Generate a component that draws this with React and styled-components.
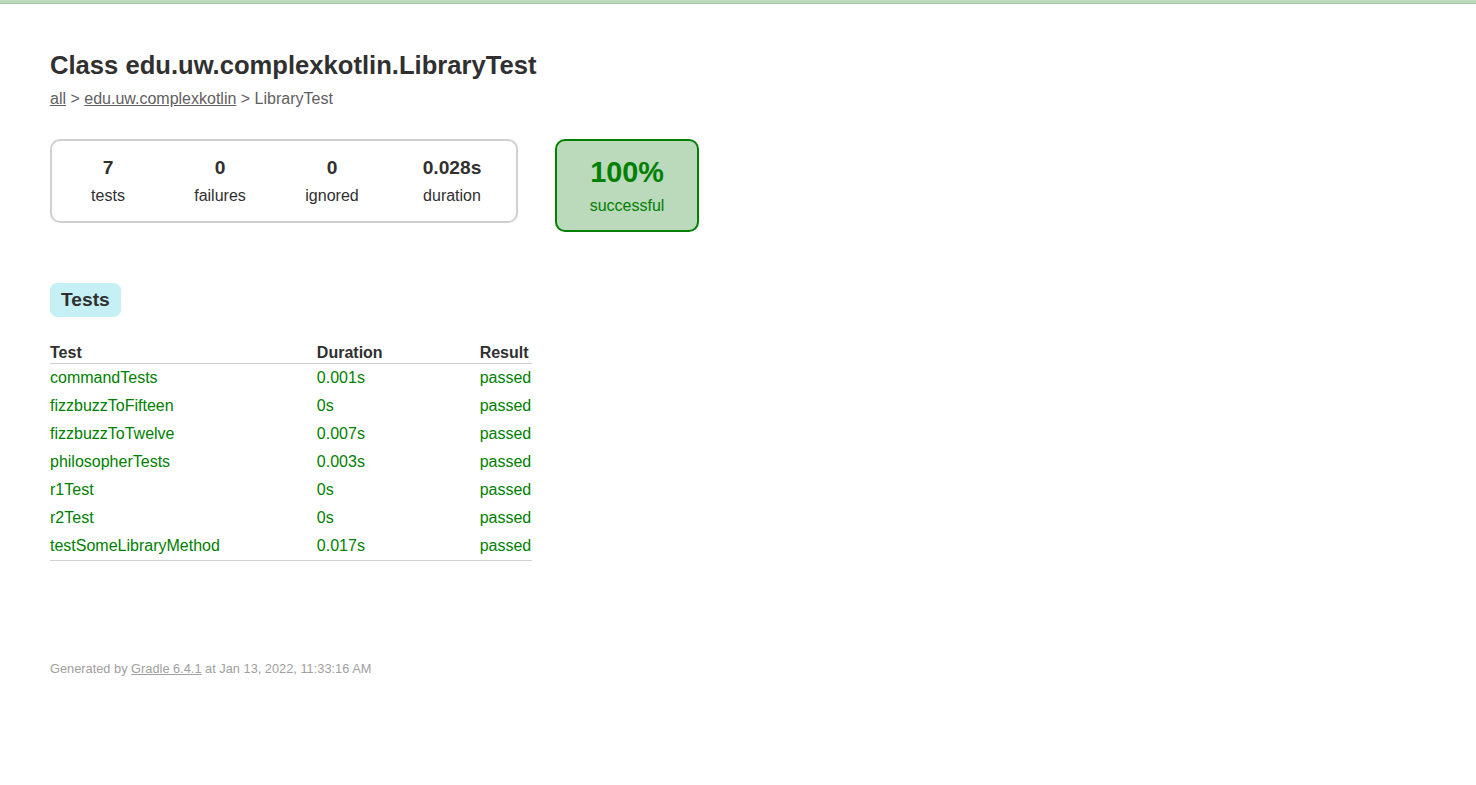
import React from 'react'
import styled, { createGlobalStyle } from 'styled-components'

const GlobalStyle = createGlobalStyle`
  html, body {
    margin: 0;
    padding: 0;
  }
  body {
    font-family: "Liberation Sans", Arial, sans-serif;
    font-size: 16px;
    color: #303030;
    background: #ffffff;
  }
`

const TopBar = styled.div`
  height: 3px;
  background-color: #bbd9bb;
  border-bottom: 1px solid #a8c8a8;
`

const Content = styled.div`
  padding: 30px 50px;
`

const Title = styled.h1`
  font-size: 25.6px;
  font-weight: bold;
  margin: 17px 0 10px;
  white-space: nowrap;
`

const Breadcrumbs = styled.div`
  color: #606060;
  a {
    color: #606060;
    text-decoration: underline;
  }
`

const Summary = styled.div`
  display: flex;
  align-items: flex-start;
  margin-top: 31px;
  margin-bottom: 41px;
`

const Group = styled.div`
  display: flex;
  border: solid 2px #d0d0d0;
  border-radius: 10px;
  padding: 1px;
  gap: 2px;
`

const InfoBox = styled.div`
  width: ${(props) => props.$width || 110}px;
  padding: 15px 0;
  text-align: center;
`

const Counter = styled.p`
  margin: 0 0 8px;
  font-size: 19.2px;
  font-weight: bold;
`

const Label = styled.p`
  margin: 0;
`

const SuccessRate = styled.div`
  width: 140px;
  margin-left: 37px;
  padding: 15px 0;
  text-align: center;
  color: #008000;
  background-color: #bbd9bb;
  border: solid 2px #008000;
  border-radius: 10px;
`

const Percent = styled.p`
  margin: 0 0 8px;
  font-size: 28.8px;
  font-weight: bold;
`

const TabLinks = styled.ul`
  display: flex;
  list-style: none;
  margin: 0;
  padding: 10px 0;
`

const Tab = styled.li`
  padding: 5px 10px;
  border-radius: 7px;
  border: solid 1px #c5f0f5;
  background-color: #c5f0f5;
  margin-right: 25px;
  font-size: 19.2px;
  font-weight: bold;
`

const TestTable = styled.table`
  border-collapse: collapse;
  border-bottom: solid #d0d0d0 1px;
  margin-top: 16px;
`

const Th = styled.th`
  text-align: left;
  white-space: nowrap;
  padding: 1px 1px 1px 6em;
  border-bottom: solid #d0d0d0 1px;
  &:first-child { padding-left: 0; }
`

const Td = styled.td`
  white-space: nowrap;
  padding: 5px 1px 5px 6em;
  color: #008000;
  &:first-child { padding-left: 0; }
`

const Footer = styled.div`
  margin-top: 100px;
  font-size: 12.8px;
  color: #a0a0a0;
  white-space: nowrap;
  a { color: #a0a0a0; }
`

const tests = [
  ['commandTests', '0.001s'],
  ['fizzbuzzToFifteen', '0s'],
  ['fizzbuzzToTwelve', '0.007s'],
  ['philosopherTests', '0.003s'],
  ['r1Test', '0s'],
  ['r2Test', '0s'],
  ['testSomeLibraryMethod', '0.017s'],
]

const counters = [
  ['7', 'tests'],
  ['0', 'failures'],
  ['0', 'ignored'],
  ['0.028s', 'duration', 126],
]

function App() {
  return (
    <>
      <GlobalStyle />
      <TopBar />
      <Content>
        <Title>Class edu.uw.complexkotlin.LibraryTest</Title>
        <Breadcrumbs>
          <a href="#">all</a> &gt; <a href="#">edu.uw.complexkotlin</a> &gt; LibraryTest
        </Breadcrumbs>
        <Summary>
          <Group>
            {counters.map(([value, label, w]) => (
              <InfoBox key={label} $width={w}>
                <Counter>{value}</Counter>
                <Label>{label}</Label>
              </InfoBox>
            ))}
          </Group>
          <SuccessRate>
            <Percent>100%</Percent>
            <Label>successful</Label>
          </SuccessRate>
        </Summary>
        <TabLinks>
          <Tab>Tests</Tab>
        </TabLinks>
        <TestTable>
          <thead>
            <tr>
              <Th>Test</Th>
              <Th>Duration</Th>
              <Th>Result</Th>
            </tr>
          </thead>
          <tbody>
            {tests.map(([name, time]) => (
              <tr key={name}>
                <Td>{name}</Td>
                <Td>{time}</Td>
                <Td>passed</Td>
              </tr>
            ))}
          </tbody>
        </TestTable>
        <Footer>
          Generated by <a href="#">Gradle 6.4.1</a> at Jan 13, 2022, 11:33:16 AM
        </Footer>
      </Content>
    </>
  )
}

export default App
